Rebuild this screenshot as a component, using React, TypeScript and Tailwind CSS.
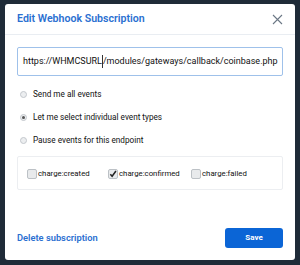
import React from "react";

export default function App() {
  const font = { fontFamily: 'Roboto, "Noto Sans", sans-serif' };
  return (
    <div className="w-[300px] h-[265px] bg-[#1f2b38] pt-[4px] pl-[5px]" style={font}>
      <div className="w-[290px] h-[256px] bg-white rounded-[3px] flex flex-col">
        <div className="h-[31px] flex items-center justify-between pl-[12px] pr-[12px] border-b border-[#e9edf2]">
          <span className="text-[10.6px] font-semibold text-[#2a6fd1]">Edit Webhook Subscription</span>
          <svg width="11" height="11" viewBox="0 0 11 11" className="mt-[1px]">
            <path d="M1 1L10 10M10 1L1 10" stroke="#6b7785" strokeWidth="1.1" />
          </svg>
        </div>
        <div className="px-[12px] pt-[12px]">
          <div className="h-[29px] border border-[#9fc1ea] rounded-[2px] flex items-center pl-[5px] overflow-hidden whitespace-nowrap">
            <span className="text-[9px] text-[#111]">https://WHMCSURL</span>
            <span className="inline-block w-[1px] h-[13px] bg-[#333]" />
            <span className="text-[9px] text-[#111]">/modules/gateways/callback/coinbase.php</span>
          </div>
          <div className="flex flex-col gap-[13px] mt-[13px] pl-[3px]">
            {[
              ["Send me all events", false],
              ["Let me select individual event types", true],
              ["Pause events for this endpoint", false],
            ].map(([label, checked]) => (
              <div key={label as string} className="flex items-center h-[10px]">
                <span className="w-[7px] h-[7px] rounded-full border border-[#c3c7cc] bg-[#eceef0] flex items-center justify-center">
                  {checked && <span className="w-[3px] h-[3px] rounded-full bg-[#555]" />}
                </span>
                <span className="ml-[6px] text-[8.2px] text-[#111]">{label as string}</span>
              </div>
            ))}
          </div>
          <div className="mt-[11px] h-[34px] border border-[#eceef1] rounded-[2px] flex items-center pl-[9px] pt-[1px]">
            {[
              ["charge:created", false, "w-[81px]"],
              ["charge:confirmed", true, "w-[83px]"],
              ["charge:failed", false, "w-[70px]"],
            ].map(([label, checked, w]) => (
              <div key={label as string} className={`flex items-center ${w as string}`}>
                <span className="w-[10px] h-[10px] rounded-[2px] border border-[#bcc1c6] bg-[#e8eaec] flex items-center justify-center">
                  {checked && (
                    <svg width="8" height="8" viewBox="0 0 9 9">
                      <path d="M1.5 4.8L3.5 7L7.8 1.2" stroke="#222" strokeWidth="1.7" fill="none" />
                    </svg>
                  )}
                </span>
                <span className="ml-[1px] text-[7.8px] text-[#111]">{label as string}</span>
              </div>
            ))}
          </div>
        </div>
        <div className="flex-1" />
        <div className="flex items-center justify-between px-[12px] pb-[12px]">
          <span className="text-[9.3px] font-semibold text-[#2a6fd1]">Delete subscription</span>
          <button className="w-[58px] h-[20px] bg-[#0b65d6] rounded-[3px] text-white text-[8px] font-bold">Save</button>
        </div>
      </div>
    </div>
  );
}
